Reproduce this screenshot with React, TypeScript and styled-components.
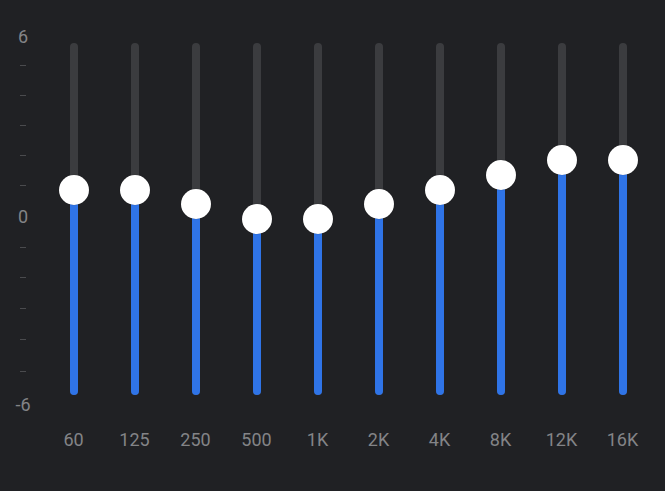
import React from "react";
import styled, { createGlobalStyle } from "styled-components";

const GlobalStyle = createGlobalStyle`
  html, body {
    margin: 0;
    padding: 0;
    background: #202124;
  }
  body {
    font-family: Roboto, "Noto Sans", "Liberation Sans", sans-serif;
  }
`;

const Page = styled.div`
  width: 665px;
  height: 491px;
  background: #202124;
  display: flex;
  flex-direction: row;
  align-items: flex-start;
  overflow: hidden;
`;

const Scale = styled.div`
  width: 40px;
  padding-left: 3px;
  margin-top: 23px;
  display: grid;
  grid-template-rows: 28px 29px 30px 30px 30px 31px 31px 30px 31px 31px 31px 33px 34px;
  justify-items: center;
  align-items: center;
`;

const ScaleLabel = styled.span`
  font-size: 18px;
  line-height: 20px;
  color: #838487;
`;

const Tick = styled.span`
  width: 6px;
  height: 1px;
  background: #4a4b4e;
`;

const Bands = styled.div`
  display: grid;
  grid-template-columns: repeat(10, 61px);
  padding-top: 43px;
`;

const Band = styled.div`
  display: flex;
  flex-direction: column;
  align-items: center;
`;

const Track = styled.div`
  position: relative;
  width: 8px;
  height: 352px;
  border-radius: 4px;
  background: #3b3c3f;
`;

const Fill = styled.div`
  position: absolute;
  left: 0;
  right: 0;
  bottom: 0;
  border-radius: 4px;
  background: #2f74e7;
`;

const Thumb = styled.div`
  position: absolute;
  left: 50%;
  width: 30px;
  height: 30px;
  border-radius: 50%;
  background: #ffffff;
  transform: translate(-50%, -50%);
  box-shadow: 0 0 1px rgba(0, 0, 0, 0.4);
`;

const BandLabel = styled.span`
  margin-top: 34px;
  font-size: 18px;
  line-height: 22px;
  color: #838487;
`;

const bands: { label: string; value: number }[] = [
  { label: "60", value: 1 },
  { label: "125", value: 1 },
  { label: "250", value: 0.5 },
  { label: "500", value: 0 },
  { label: "1K", value: 0 },
  { label: "2K", value: 0.5 },
  { label: "4K", value: 1 },
  { label: "8K", value: 1.5 },
  { label: "12K", value: 2 },
  { label: "16K", value: 2 },
];

const scaleItems: (string | null)[] = [
  "6", null, null, null, null, null, "0", null, null, null, null, null, "-6",
];

export default function App() {
  return (
    <>
      <GlobalStyle />
      <Page>
        <Scale>
          {scaleItems.map((s, i) =>
            s === null ? <Tick key={i} /> : <ScaleLabel key={i}>{s}</ScaleLabel>
          )}
        </Scale>
        <Bands>
          {bands.map((b) => {
            const pct = ((b.value + 6) / 12) * 100;
            return (
              <Band key={b.label}>
                <Track>
                  <Fill style={{ height: `${pct}%` }} />
                  <Thumb style={{ top: `${100 - pct}%` }} />
                </Track>
                <BandLabel>{b.label}</BandLabel>
              </Band>
            );
          })}
        </Bands>
      </Page>
    </>
  );
}
